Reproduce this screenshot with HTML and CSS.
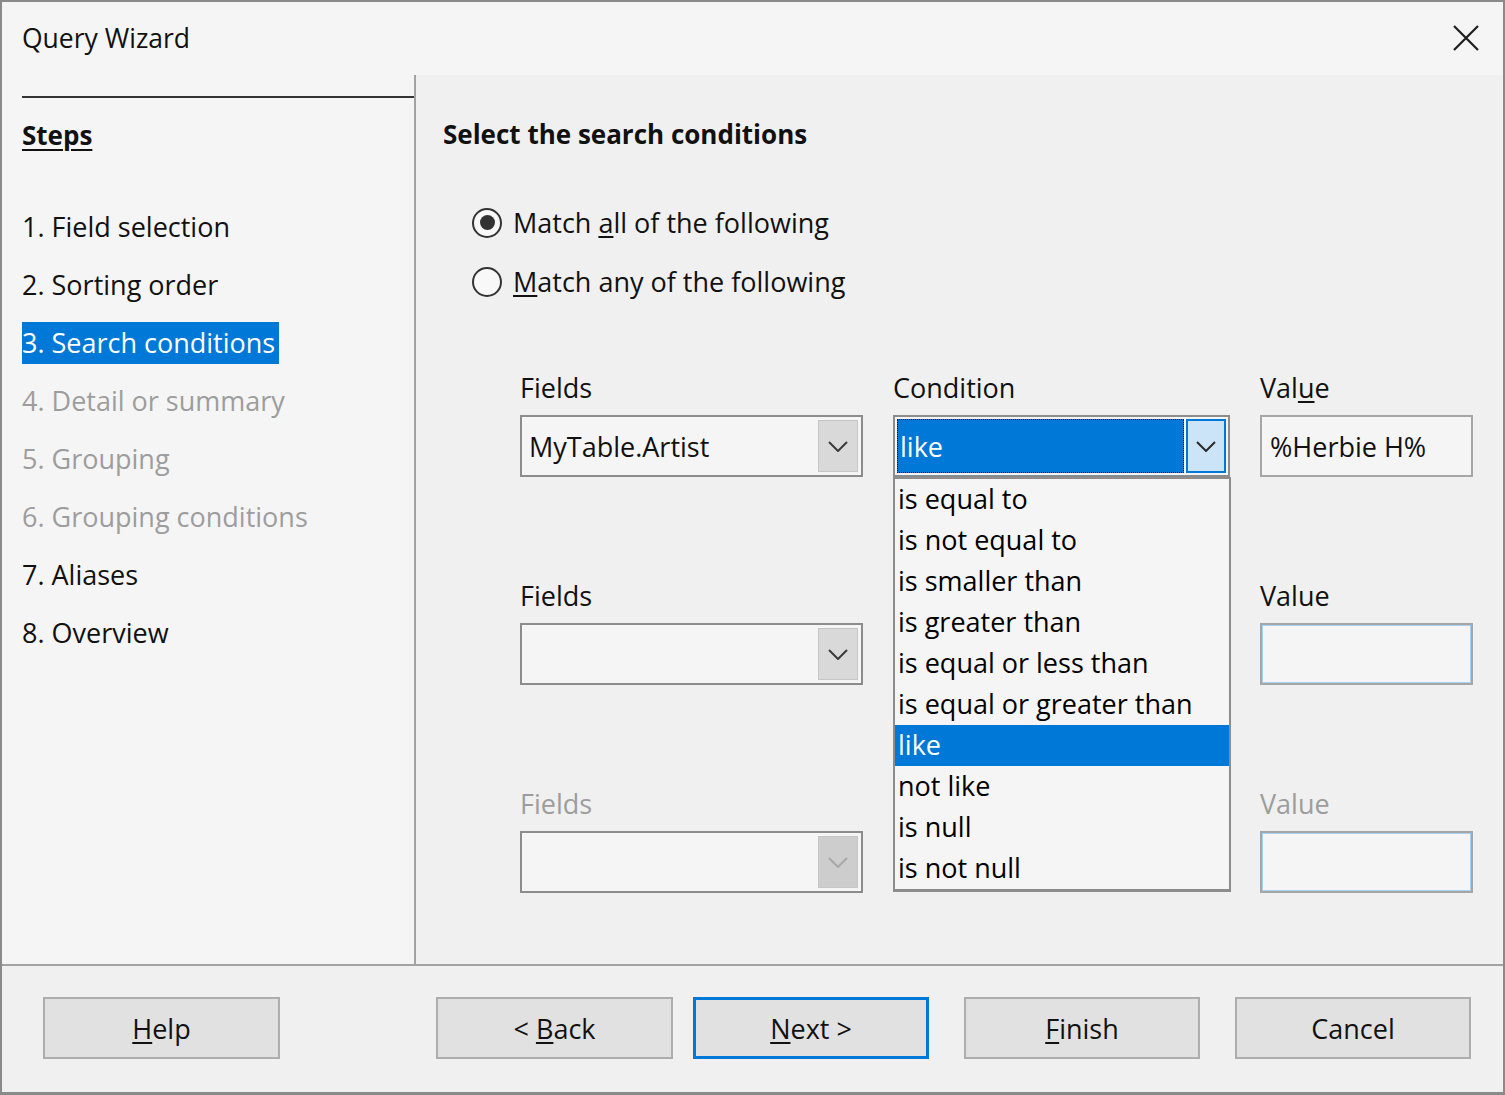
FILE: index.html
```html
<!DOCTYPE html>
<html lang="en">
<head>
<meta charset="utf-8">
<title>Query Wizard</title>
<link rel="stylesheet" href="styles.css">
</head>
<body>
<div class="dialog">
  <div class="titlebar">
    <span class="title">Query Wizard</span>
    <span class="close"><svg width="26" height="26" viewBox="0 0 26 26"><path d="M1 1 L25 25 M25 1 L1 25" stroke="#1e1e1e" stroke-width="2.2" fill="none"/></svg></span>
  </div>
  <div class="main">
    <aside class="steps">
      <div class="steps-rule"></div>
      <div class="steps-title">Steps</div>
      <ul class="step-list">
        <li><span>1. Field selection</span></li>
        <li><span>2. Sorting order</span></li>
        <li class="current"><span>3. Search conditions</span></li>
        <li class="disabled"><span>4. Detail or summary</span></li>
        <li class="disabled"><span>5. Grouping</span></li>
        <li class="disabled"><span>6. Grouping conditions</span></li>
        <li><span>7. Aliases</span></li>
        <li><span>8. Overview</span></li>
      </ul>
    </aside>
    <section class="content">
      <h2 class="heading">Select the search conditions</h2>
      <div class="radios">
        <div class="radio-row"><span class="radio checked"></span><span>Match <u>a</u>ll of the following</span></div>
        <div class="radio-row"><span class="radio"></span><span><u>M</u>atch any of the following</span></div>
      </div>
      <div class="cond-grid">
        <div class="cell">
          <div class="label">Fields</div>
          <div class="combo"><span class="combo-text">MyTable.Artist</span><span class="combo-btn"><svg width="20" height="11" viewBox="0 0 20 11"><path d="M1 1 L10 10 L19 1" stroke="#3a3a3a" stroke-width="2" fill="none"/></svg></span></div>
        </div>
        <div class="cell">
          <div class="label">Condition</div>
          <div class="combo focus">
            <span class="combo-sel">like</span>
            <span class="combo-btn hot"><svg width="20" height="11" viewBox="0 0 20 11"><path d="M1 1 L10 10 L19 1" stroke="#2a2a2a" stroke-width="2" fill="none"/></svg></span>
            <ul class="dropdown">
              <li>is equal to</li>
              <li>is not equal to</li>
              <li>is smaller than</li>
              <li>is greater than</li>
              <li>is equal or less than</li>
              <li>is equal or greater than</li>
              <li class="selected">like</li>
              <li>not like</li>
              <li>is null</li>
              <li>is not null</li>
            </ul>
          </div>
        </div>
        <div class="cell">
          <div class="label">Val<u>u</u>e</div>
          <div class="textbox">%Herbie H%</div>
        </div>

        <div class="cell">
          <div class="label">Fields</div>
          <div class="combo"><span class="combo-text"></span><span class="combo-btn"><svg width="20" height="11" viewBox="0 0 20 11"><path d="M1 1 L10 10 L19 1" stroke="#3a3a3a" stroke-width="2" fill="none"/></svg></span></div>
        </div>
        <div class="cell"></div>
        <div class="cell">
          <div class="label">Value</div>
          <div class="textbox blue"></div>
        </div>

        <div class="cell">
          <div class="label disabled">Fields</div>
          <div class="combo"><span class="combo-text"></span><span class="combo-btn off"><svg width="20" height="11" viewBox="0 0 20 11"><path d="M1 1 L10 10 L19 1" stroke="#a8a8a8" stroke-width="2" fill="none"/></svg></span></div>
        </div>
        <div class="cell"></div>
        <div class="cell">
          <div class="label disabled">Value</div>
          <div class="textbox blue"></div>
        </div>
      </div>
    </section>
  </div>
  <div class="buttons">
    <button class="btn"><u>H</u>elp</button>
    <div class="btn-group">
      <button class="btn back">&lt; <u>B</u>ack</button>
      <button class="btn default"><u>N</u>ext &gt;</button>
      <button class="btn"><u>F</u>inish</button>
      <button class="btn">Cancel</button>
    </div>
  </div>
</div>
</body>
</html>
```

FILE: styles.css
```css
* { box-sizing: border-box; }
html, body { margin: 0; padding: 0; }
body {
  width: 1505px;
  height: 1095px;
  overflow: hidden;
  background: #f0f0f0;
  font-family: "Open Sans", "Noto Sans", sans-serif;
  font-size: 27px;
  color: #111;
}
u { text-decoration-thickness: 2px; text-underline-offset: 3px; }

.dialog {
  width: 1505px;
  height: 1095px;
  border: 2px solid #8a8a8a;
  border-bottom-width: 3px;
  display: flex;
  flex-direction: column;
  background: #f0f0f0;
}

.titlebar {
  height: 73px;
  flex: none;
  background: #f5f5f5;
  display: flex;
  align-items: center;
  justify-content: space-between;
  padding: 0 24px 2px 20px;
}
.title { line-height: 40px; color: #111; font-size: 26.5px; }
.close { display: flex; }

.main {
  height: 889px;
  flex: none;
  display: flex;
}

.steps {
  width: 414px;
  flex: none;
  background: #f5f5f5;
  border-right: 2px solid #a3a3a3;
  padding-left: 20px;
  padding-top: 21px;
}
.steps-rule { height: 2px; background: #333; }
.steps-title {
  margin-top: 16px;
  line-height: 42px;
  font-size: 26px;
  font-weight: 700;
  text-decoration: underline;
  text-decoration-thickness: 2px;
  text-underline-offset: 4px;
}
.step-list { list-style: none; margin: 42px 0 0; padding: 0; }
.step-list li { height: 58px; display: flex; align-items: center; }
.step-list li span { line-height: 42px; padding-right: 4px; }
.step-list li.current span { background: #0078d7; color: #fff; }
.step-list li.disabled { color: #9d9d9d; }

.content {
  flex: 1;
  padding-left: 27px;
}
.heading {
  margin: 38px 0 0;
  font-size: 26px;
  font-weight: 700;
  line-height: 42px;
}
.radios { margin-top: 38px; padding-left: 29px; }
.radio-row { height: 59px; display: flex; align-items: center; gap: 11px; }
.radio {
  width: 30px;
  height: 30px;
  border: 2px solid #333;
  border-radius: 50%;
  background: #f8f8f8;
  display: flex;
  align-items: center;
  justify-content: center;
}
.radio.checked::after {
  content: "";
  width: 15px;
  height: 15px;
  border-radius: 50%;
  background: #333;
}

.cond-grid {
  margin-top: 56px;
  margin-left: 77px;
  display: grid;
  grid-template-columns: 343px 337px 213px;
  column-gap: 30px;
  row-gap: 98px;
}
.label { line-height: 42px; margin-bottom: 6px; }
.label.disabled { color: #9d9d9d; }

.combo {
  position: relative;
  height: 62px;
  border: 2px solid #8c8c8c;
  background: #f5f5f5;
  display: flex;
  align-items: center;
}
.combo-text { flex: 1; padding-left: 7px; }
.combo-btn {
  width: 40px;
  height: 52px;
  margin-right: 3px;
  background: #d9d9d9;
  border: 1px solid #c6c6c6;
  display: flex;
  align-items: center;
  justify-content: center;
}
.combo-btn.off { background: #cdcdcd; }
.combo.focus { padding: 2px; }
.combo-sel {
  flex: 1;
  align-self: stretch;
  background: #0078d7;
  color: #fff;
  outline: 1px dotted #111;
  outline-offset: -1px;
  padding-left: 3px;
  display: flex;
  align-items: center;
}
.combo-btn.hot {
  height: 54px;
  margin: 0 0 0 2px;
  background: #cce4f7;
  border: 2px solid #0078d7;
}

.dropdown {
  position: absolute;
  top: 60px;
  left: -2px;
  width: 338px;
  margin: 0;
  padding: 0;
  list-style: none;
  background: #f5f5f5;
  border: 2px solid #8c8c8c;
  border-bottom-width: 3px;
  z-index: 10;
}
.dropdown li { height: 41px; line-height: 39px; padding-left: 3px; color: #000; }
.dropdown li.selected { background: #0078d7; color: #fff; }

.textbox {
  height: 62px;
  border: 2px solid #a6a6a6;
  background: #f5f5f5;
  padding-left: 8px;
  display: flex;
  align-items: center;
}
.textbox.blue { box-shadow: inset 0 0 0 1px #a9d1f2; }

.buttons {
  flex: 1;
  border-top: 2px solid #a3a3a3;
  padding: 31px 32px 0 41px;
  display: flex;
  align-items: flex-start;
  justify-content: space-between;
}
.btn-group { display: flex; }
.btn {
  width: 237px;
  height: 62px;
  background: #e1e1e1;
  border: 2px solid #adadad;
  font-family: inherit;
  font-size: 27px;
  color: #111;
  padding: 0;
  margin: 0;
}
.btn-group .btn { width: 236px; }
.btn-group .btn.back { width: 237px; }
.btn-group .btn + .btn { margin-left: 35px; }
.btn-group .btn.default { margin-left: 20px; border: 3px solid #0078d7; }
```
